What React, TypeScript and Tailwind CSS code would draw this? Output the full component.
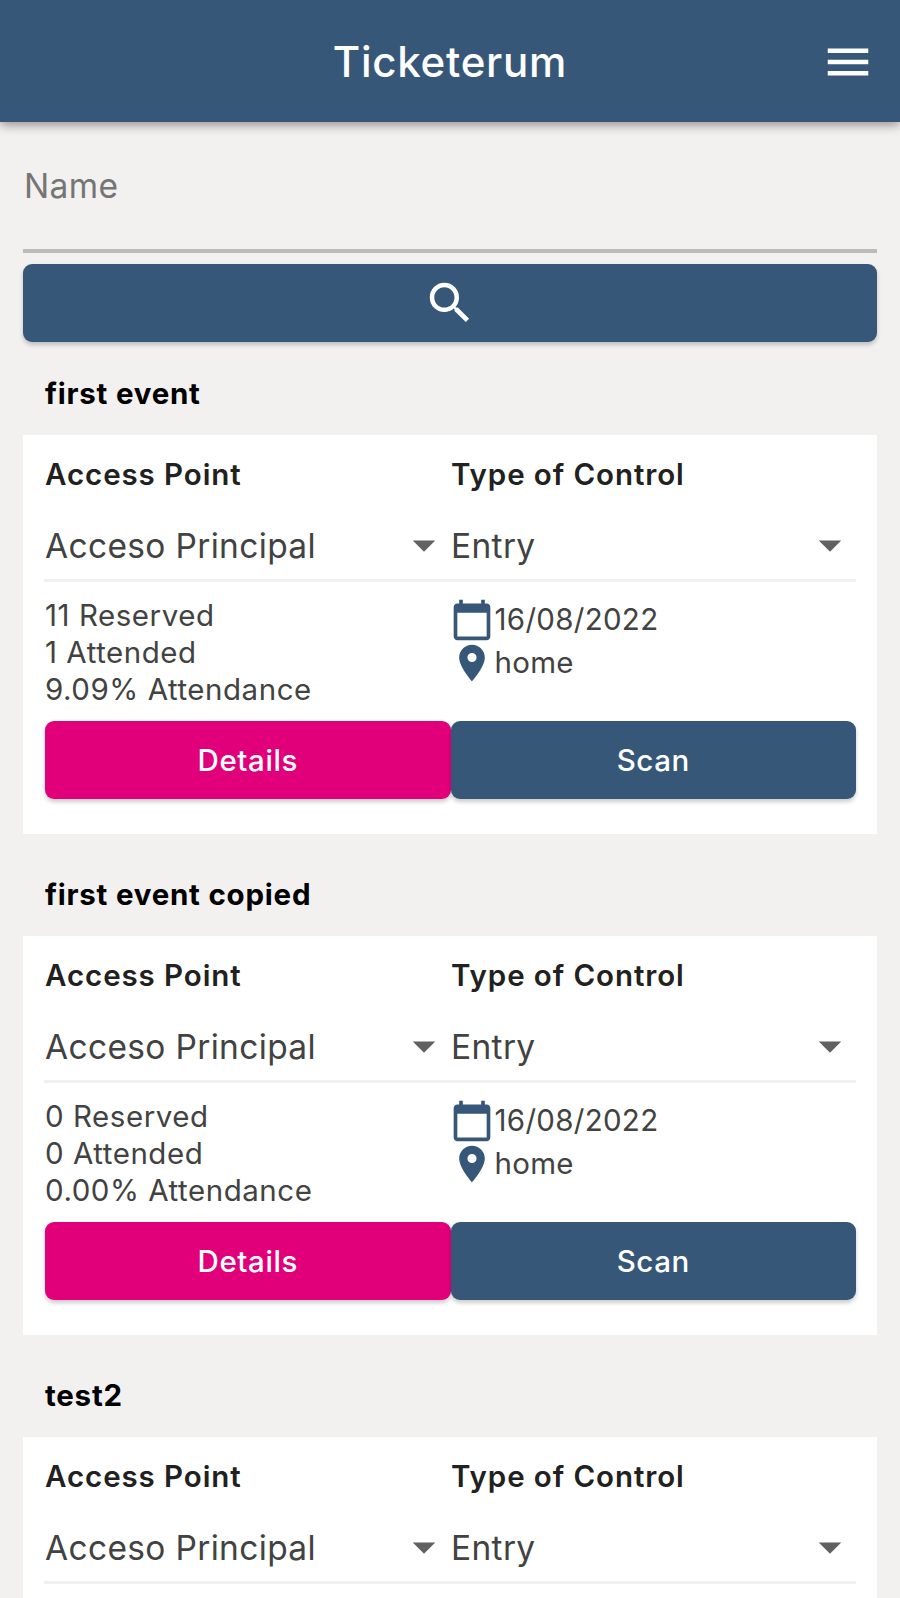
import React, { useState } from 'react';
import { MdArrowDropDown, MdCalendarToday, MdLocationOn, MdMenu, MdSearch } from 'react-icons/md';

interface EventSummary {
    reserved: number;
    attended: number;
    date: string;
    place: string;
}

interface TicketEvent {
    id: number;
    name: string;
    accessPoint: string;
    control: string;
    summary?: EventSummary;
}

const events: TicketEvent[] = [
    {
        id: 1,
        name: 'first event',
        accessPoint: 'Acceso Principal',
        control: 'Entry',
        summary: { reserved: 11, attended: 1, date: '16/08/2022', place: 'home' },
    },
    {
        id: 2,
        name: 'first event copied',
        accessPoint: 'Acceso Principal',
        control: 'Entry',
        summary: { reserved: 0, attended: 0, date: '16/08/2022', place: 'home' },
    },
    { id: 3, name: 'test2', accessPoint: 'Acceso Principal', control: 'Entry' },
];

const buttonShadow = 'shadow-[0_3px_4px_rgba(0,0,0,0.2)]';

const attendance = ({ reserved, attended }: EventSummary) =>
    reserved === 0 ? '0.00' : ((attended / reserved) * 100).toFixed(2);

const SelectField: React.FC<{ label: string; value: string }> = ({ label, value }) => (
    <div className="flex-1 min-w-0 border-b-[3px] border-[#f0f0f0]">
        <div className="h-11 pl-px leading-[44px] text-[29.5px] font-semibold tracking-[0.031em] text-[#212121]">{label}</div>
        <button type="button" className="w-full h-[83px] pl-px pt-[17px] flex items-center justify-between text-left">
            <span className="text-[33.5px] leading-[40px] tracking-[0.01em] text-[#424242] whitespace-nowrap">{value}</span>
            <MdArrowDropDown className="size-[54px] -mr-px mb-0.5 shrink-0 text-[#616161]" />
        </button>
    </div>
);

const Summary: React.FC<{ summary: EventSummary }> = ({ summary }) => (
    <>
        <div className="flex pt-[15px] h-[139px] text-[29.5px] text-[#424242]">
            <div className="flex-1 pl-px leading-[36.8px] tracking-[0.018em]">
                <p>{summary.reserved} Reserved</p>
                <p>{summary.attended} Attended</p>
                <p>{attendance(summary)}% Attendance</p>
            </div>
            <div className="flex-1 pt-px leading-[43px] tracking-[0.01em]">
                <p className="flex items-center h-[43px]">
                    <MdCalendarToday className="size-11 -ml-px mr-px shrink-0 text-[#365778]" />
                    {summary.date}
                </p>
                <p className="flex items-center h-[43px]">
                    <MdLocationOn className="size-11 -ml-px mr-px shrink-0 text-[#365778]" />
                    {summary.place}
                </p>
            </div>
        </div>
        <div className="flex h-[78px] pl-px text-[29.5px] font-medium tracking-[0.02em] text-white">
            <button type="button" className={`flex-1 rounded-[9px] bg-[#e2007a] ${buttonShadow}`}>Details</button>
            <button type="button" className={`flex-1 rounded-[9px] bg-[#365778] ${buttonShadow}`}>Scan</button>
        </div>
    </>
);

const EventCard: React.FC<{ event: TicketEvent }> = ({ event }) => (
    <section className="mb-[19px]">
        <h2 className="h-[83px] leading-[83px] pl-[22px] text-[29.5px] font-bold tracking-[0.026em] text-black">{event.name}</h2>
        <div className="bg-white px-[21px] pt-[17px] pb-[35px]">
            <div className="flex">
                <SelectField label="Access Point" value={event.accessPoint} />
                <SelectField label="Type of Control" value={event.control} />
            </div>
            {event.summary && <Summary summary={event.summary} />}
        </div>
    </section>
);

const App: React.FC = () => {
    const [name, setName] = useState<string>('');

    return (
        <div className="h-[1598px] overflow-hidden bg-[#f3f1f0] font-['Inter',sans-serif]">
            <header className="relative h-[122px] pt-px grid grid-cols-[1fr_auto_1fr] items-center bg-[#365778] text-white shadow-[0_3px_10px_rgba(0,0,0,0.4)]">
                <h1 className="col-start-2 text-[42px] font-medium tracking-[0.018em]">Ticketerum</h1>
                <button type="button" aria-label="Menu" className="justify-self-end mr-[25px]">
                    <MdMenu className="size-[54px]" />
                </button>
            </header>
            <main className="px-[23px]">
                <input
                    value={name}
                    onChange={(e) => setName(e.target.value)}
                    placeholder="Name"
                    className="block w-full h-[131px] pl-px pt-px border-b-4 border-[#bdbbba] bg-transparent outline-none text-[33.5px] tracking-[0.01em] text-[#424242] placeholder:text-[#757575]"
                />
                <button type="button" aria-label="Search" className={`mt-[11px] mb-[10px] w-full h-[78px] flex items-center justify-center rounded-[9px] bg-[#365778] text-white ${buttonShadow}`}>
                    <MdSearch className="size-[54px]" />
                </button>
                {events.map((event) => (
                    <EventCard key={event.id} event={event} />
                ))}
            </main>
        </div>
    );
};

export default App;
